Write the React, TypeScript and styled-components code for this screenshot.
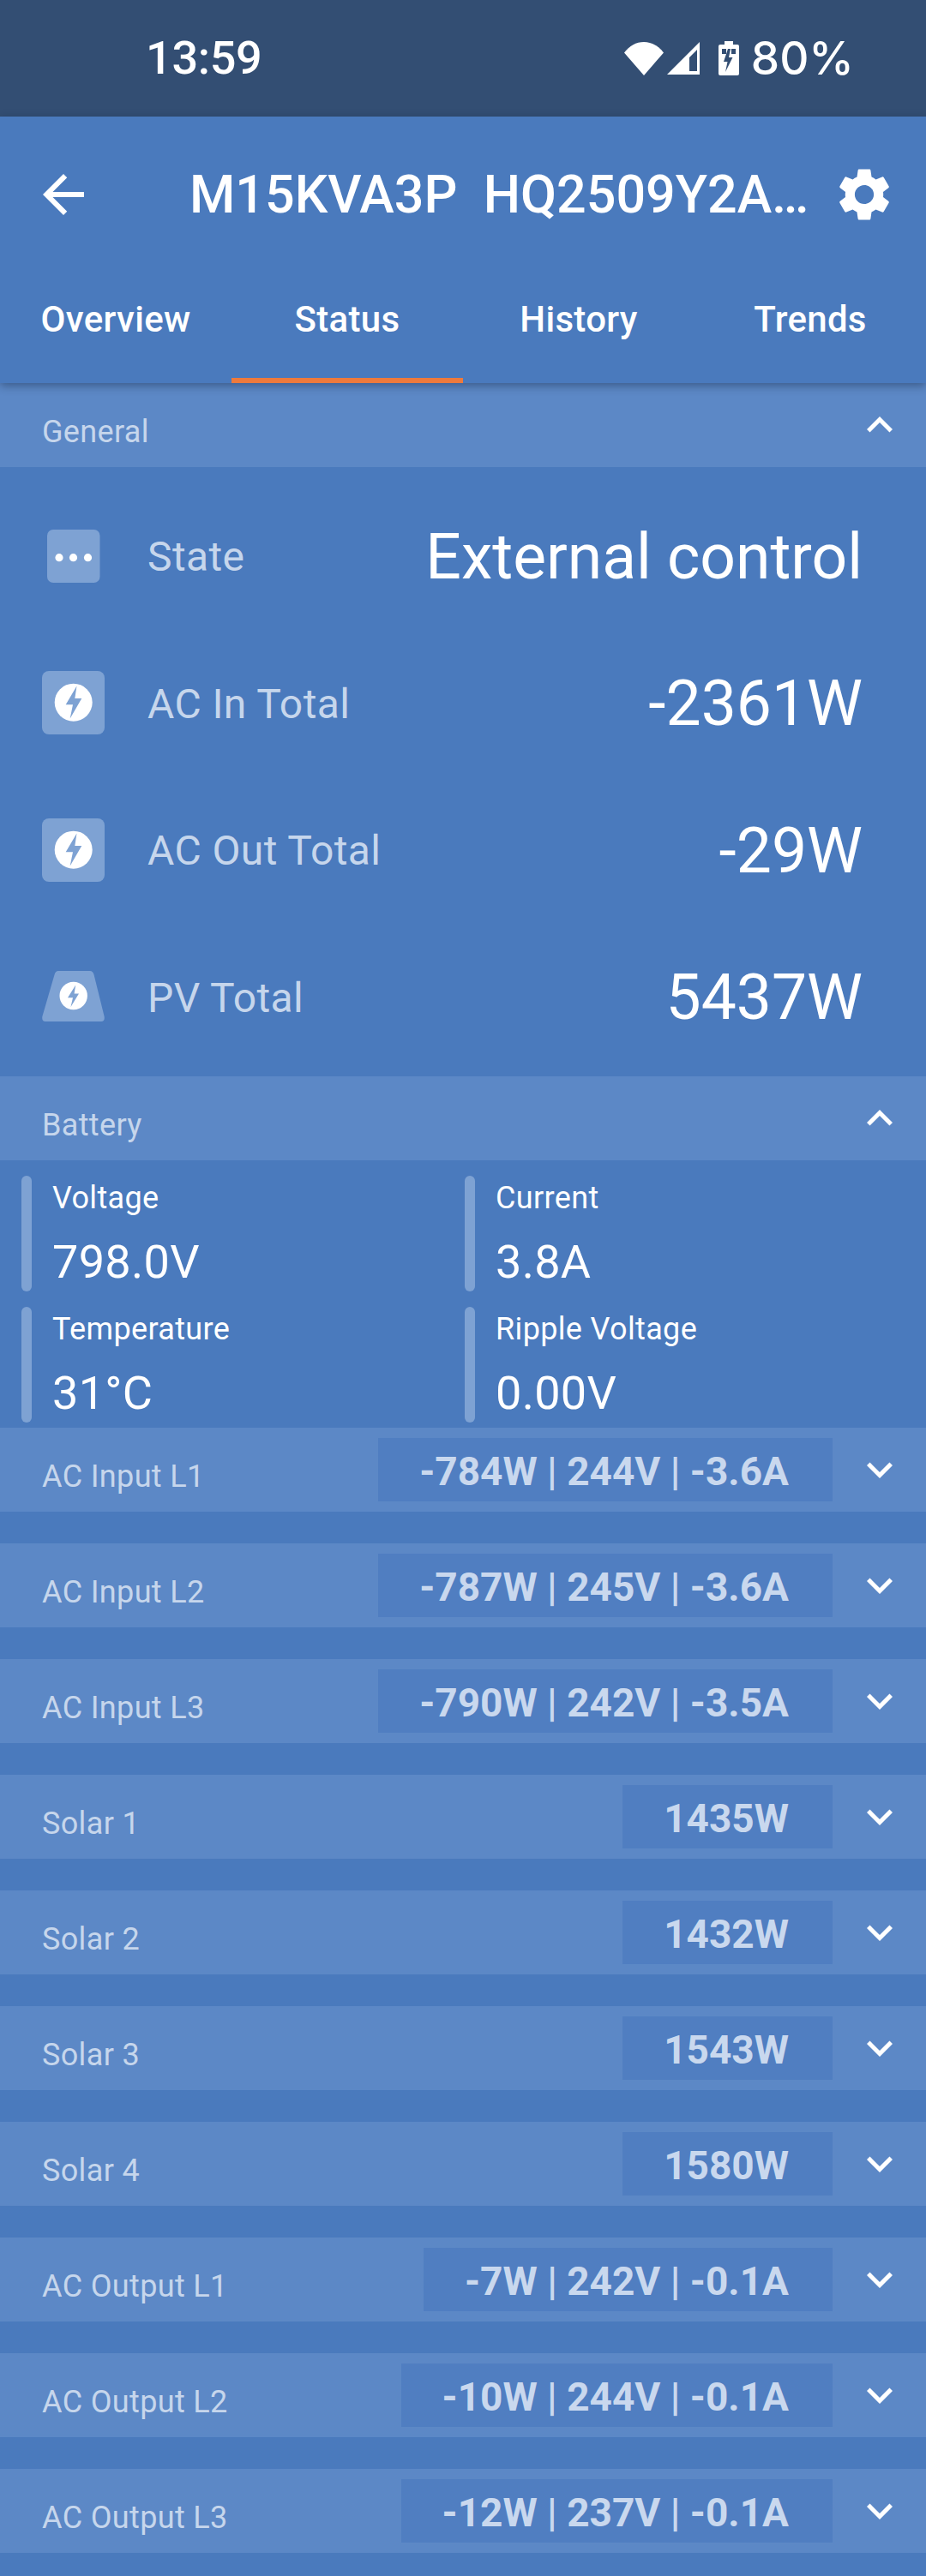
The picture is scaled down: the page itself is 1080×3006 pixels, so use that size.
import React from "react";
import styled, { createGlobalStyle } from "styled-components";

const Global = createGlobalStyle`
  html, body { margin: 0; padding: 0; background: #4a7abd; }
  * { box-sizing: border-box; }
`;

const Page = styled.div`
  width: 1080px;
  height: 3006px;
  overflow: hidden;
  background: #4a7abd;
  font-family: Roboto, "Liberation Sans", sans-serif;
  color: #fff;
`;

const StatusBar = styled.div`
  height: 136px;
  background: #334e73;
  display: flex;
  align-items: center;
  padding: 0 84px 0 170px;
`;
const Clock = styled.div`
  font-size: 54px;
  font-weight: 500;
  line-height: 136px;
  letter-spacing: -0.3px;
`;
const StatusRight = styled.div`
  margin-left: auto;
  display: flex;
  align-items: center;
`;
const WifiIcon = styled.svg`
  display: block;
  width: 46px;
  height: 39px;
  margin-right: 4px;
`;
const SignalIcon = styled.svg`
  display: block;
  width: 38px;
  height: 38px;
  margin-right: 22px;
`;
const BatteryIcon = styled.svg`
  display: block;
  width: 24px;
  height: 40px;
  margin-right: 14px;
`;
const Percent = styled.div`
  font-family: Inter, Roboto, sans-serif;
  font-size: 53px;
  font-weight: 500;
  line-height: 136px;
`;

const Header = styled.header`
  position: relative;
  z-index: 2;
  background: #4a7abd;
  box-shadow: 0 3px 10px rgba(20, 35, 60, 0.45);
`;
const Toolbar = styled.div`
  height: 181px;
  display: flex;
  align-items: center;
  padding-left: 38px;
`;
const BackIcon = styled.svg`
  display: block;
  width: 72px;
  height: 72px;
  flex: none;
  fill: #fff;
`;
const GearIcon = styled.svg`
  display: block;
  width: 74px;
  height: 74px;
  flex: none;
  fill: #fff;
`;
const Title = styled.div`
  width: 750px;
  margin-left: 111px;
  flex: none;
  font-size: 61px;
  font-weight: 500;
  white-space: pre;
`;
const Tabs = styled.div`
  display: grid;
  grid-template-columns: repeat(4, 270px);
`;
const Tab = styled.div<{ $active?: boolean }>`
  height: 130px;
  padding-top: 31px;
  text-align: center;
  font-size: 42px;
  font-weight: 500;
  line-height: 50px;
  letter-spacing: 0.3px;
  border-bottom: 6px solid ${(p) => (p.$active ? "#ee7a3c" : "transparent")};
`;

const SectionHead = styled.div`
  height: 98px;
  background: #5c88c6;
  display: flex;
  align-items: center;
  padding: 0 24px 0 49px;
`;
const SectionLabel = styled.div`
  padding-top: 16px;
  font-size: 36px;
  letter-spacing: 0.35px;
  color: #c6d6ec;
`;
const Chevron = styled.svg`
  display: block;
  width: 60px;
  height: 60px;
  flex: none;
  fill: #fff;
`;
const HeadEnd = styled.div`
  margin-left: auto;
  display: flex;
  align-items: center;
  gap: 25px;
`;
const ValueBox = styled.div`
  height: 74px;
  padding: 4px 51px 0 48px;
  background: #507ec1;
  color: #c9d8ee;
  font-size: 46px;
  font-weight: 700;
  line-height: 70px;
  white-space: pre;
`;

const GeneralList = styled.div`
  padding: 18px 0 7px;
`;
const GeneralRow = styled.div`
  height: 171.5px;
  display: flex;
  align-items: center;
  padding: 0 74px 0 49px;
`;
const TileBox = styled.div`
  width: 73px;
  height: 74px;
  flex: none;
`;
const Tile = styled.svg`
  display: block;
  width: 73px;
  height: 74px;
`;
const RowLabel = styled.div`
  margin-left: 50px;
  padding-top: 2px;
  font-size: 48px;
  letter-spacing: 0.4px;
  color: #c6d6ec;
`;
const RowValue = styled.div`
  margin-left: auto;
  padding-top: 2px;
  font-size: 73.2px;
`;

const BatteryGrid = styled.div`
  display: grid;
  grid-template-columns: 517px 1fr;
  row-gap: 18px;
  padding: 18px 0 6px 25px;
`;
const Metric = styled.div`
  height: 135px;
  display: flex;
  gap: 24px;
`;
const MetricBar = styled.div`
  width: 12px;
  height: 100%;
  border-radius: 6px;
  background: #7ea2d3;
`;
const MetricText = styled.div`
  padding-top: 4px;
`;
const MetricLabel = styled.div`
  font-size: 36px;
  line-height: 44px;
  letter-spacing: 0.35px;
`;
const MetricValue = styled.div`
  margin-top: 21px;
  font-size: 54px;
  line-height: 64px;
  letter-spacing: 0.3px;
`;

const CollapsedRow = styled.div`
  margin-bottom: 37px;
`;

const TILE = "#7ea2d3";

const Bolt = () => (
  <>
    <circle cx="36.7" cy="36.7" r="22" fill="#fff" />
    <path d="M40.5 17.5 27.7 39.3H36L32.7 55.5 46.3 32H38.3Z" fill={TILE} />
  </>
);

const DotsTile = () => (
  <Tile viewBox="0 0 73 74">
    <rect x="6" y="6" width="61.5" height="62" rx="7" fill={TILE} />
    <circle cx="20" cy="38.7" r="4.6" fill="#fff" />
    <circle cx="36.5" cy="38.7" r="4.6" fill="#fff" />
    <circle cx="53.5" cy="38.7" r="4.6" fill="#fff" />
  </Tile>
);
const BoltTile = () => (
  <Tile viewBox="0 0 73 74">
    <rect width="73" height="74" rx="8" fill={TILE} />
    <Bolt />
  </Tile>
);
const PvTile = () => (
  <Tile viewBox="0 0 73 74">
    <path
      d="M14.5 11.5Q15.6 7 19 7H56Q59.4 7 60.6 11.5L72.6 60Q73.6 66 69 66H4Q-.6 66 .4 60Z"
      fill={TILE}
    />
    <circle cx="36.7" cy="36" r="16.2" fill="#fff" />
    <path d="M39.2 23.5 30 38.2H36L33.5 49 43 33.5H37.6Z" fill={TILE} />
  </Tile>
);

const Down = () => (
  <Chevron viewBox="0 0 24 24">
    <path d="M7.41 8.59 12 13.17l4.59-4.58L18 10l-6 6-6-6 1.41-1.41z" />
  </Chevron>
);
const Up = () => (
  <Chevron viewBox="0 0 24 24">
    <path d="M7.41 15.41 12 10.83l4.59 4.58L18 14l-6-6-6 6z" />
  </Chevron>
);

const general = [
  { label: "State", value: "External control", icon: <DotsTile /> },
  { label: "AC In Total", value: "-2361W", icon: <BoltTile /> },
  { label: "AC Out Total", value: "-29W", icon: <BoltTile /> },
  { label: "PV Total", value: "5437W", icon: <PvTile /> },
];
const metrics = [
  { label: "Voltage", value: "798.0V" },
  { label: "Current", value: "3.8A" },
  { label: "Temperature", value: "31°C" },
  { label: "Ripple Voltage", value: "0.00V" },
];
const rows = [
  { label: "AC Input L1", value: "-784W | 244V | -3.6A" },
  { label: "AC Input L2", value: "-787W | 245V | -3.6A" },
  { label: "AC Input L3", value: "-790W | 242V | -3.5A" },
  { label: "Solar 1", value: "1435W" },
  { label: "Solar 2", value: "1432W" },
  { label: "Solar 3", value: "1543W" },
  { label: "Solar 4", value: "1580W" },
  { label: "AC Output L1", value: "-7W | 242V | -0.1A" },
  { label: "AC Output L2", value: "-10W | 244V | -0.1A" },
  { label: "AC Output L3", value: "-12W | 237V | -0.1A" },
];

export default function App() {
  return (
    <Page>
      <Global />
      <StatusBar>
        <Clock>13:59</Clock>
        <StatusRight>
          <WifiIcon viewBox="0 0 46 39">
            <path d="M0 12.5C6 4.5 14 0 23 0s17 4.5 23 12.5L23 39Z" fill="#fff" />
          </WifiIcon>
          <SignalIcon viewBox="0 0 38 38">
            <path
              fillRule="evenodd"
              d="M38 0V38H0ZM35 9 26 18V34H35Z"
              fill="#fff"
            />
          </SignalIcon>
          <BatteryIcon viewBox="0 0 24 40">
            <path
              fillRule="evenodd"
              d="M7 0H17V4H22Q24 4 24 6V38Q24 40 22 40H2Q0 40 0 38V6Q0 4 2 4H7ZM4 9V15H9V9ZM15 9V15H20V9ZM11 9 6 24H10.5L8 36 16.5 19H12L14 9Z"
              fill="#fff"
            />
          </BatteryIcon>
          <Percent>80%</Percent>
        </StatusRight>
      </StatusBar>

      <Header>
        <Toolbar>
          <BackIcon viewBox="0 0 24 24">
            <path d="M20 11H7.83l5.59-5.59L12 4l-8 8 8 8 1.41-1.41L7.83 13H20v-2z" />
          </BackIcon>
          <Title>{"M15KVA3P  HQ2509Y2A…"}</Title>
          <GearIcon viewBox="0 0 24 24">
            <path d="M19.14 12.94c.04-.3.06-.61.06-.94 0-.32-.02-.64-.07-.94l2.03-1.58c.18-.14.23-.41.12-.61l-1.92-3.32c-.12-.22-.37-.29-.59-.22l-2.39.96c-.5-.38-1.03-.7-1.62-.94l-.36-2.54c-.04-.24-.24-.41-.48-.41h-3.84c-.24 0-.43.17-.47.41l-.36 2.54c-.59.24-1.13.57-1.62.94l-2.39-.96c-.22-.08-.47 0-.59.22L2.74 8.87c-.12.21-.08.47.12.61l2.03 1.58c-.05.3-.09.63-.09.94s.02.64.07.94l-2.03 1.58c-.18.14-.23.41-.12.61l1.92 3.32c.12.22.37.29.59.22l2.39-.96c.5.38 1.03.7 1.62.94l.36 2.54c.05.24.24.41.48.41h3.84c.24 0 .44-.17.47-.41l.36-2.54c.59-.24 1.13-.56 1.62-.94l2.39.96c.22.08.47 0 .59-.22l1.92-3.32c.12-.22.07-.47-.12-.61l-2.01-1.58zM12 15.6c-1.98 0-3.6-1.62-3.6-3.6s1.62-3.6 3.6-3.6 3.6 1.62 3.6 3.6-1.62 3.6-3.6 3.6z" />
          </GearIcon>
        </Toolbar>
        <Tabs>
          <Tab>Overview</Tab>
          <Tab $active>Status</Tab>
          <Tab>History</Tab>
          <Tab>Trends</Tab>
        </Tabs>
      </Header>

      <SectionHead>
        <SectionLabel>General</SectionLabel>
        <HeadEnd>
          <Up />
        </HeadEnd>
      </SectionHead>
      <GeneralList>
        {general.map((g) => (
          <GeneralRow key={g.label}>
            <TileBox>{g.icon}</TileBox>
            <RowLabel>{g.label}</RowLabel>
            <RowValue>{g.value}</RowValue>
          </GeneralRow>
        ))}
      </GeneralList>

      <SectionHead>
        <SectionLabel>Battery</SectionLabel>
        <HeadEnd>
          <Up />
        </HeadEnd>
      </SectionHead>
      <BatteryGrid>
        {metrics.map((m) => (
          <Metric key={m.label}>
            <MetricBar />
            <MetricText>
              <MetricLabel>{m.label}</MetricLabel>
              <MetricValue>{m.value}</MetricValue>
            </MetricText>
          </Metric>
        ))}
      </BatteryGrid>

      {rows.map((r) => (
        <CollapsedRow key={r.label}>
          <SectionHead>
            <SectionLabel>{r.label}</SectionLabel>
            <HeadEnd>
              <ValueBox>{r.value}</ValueBox>
              <Down />
            </HeadEnd>
          </SectionHead>
        </CollapsedRow>
      ))}
    </Page>
  );
}
